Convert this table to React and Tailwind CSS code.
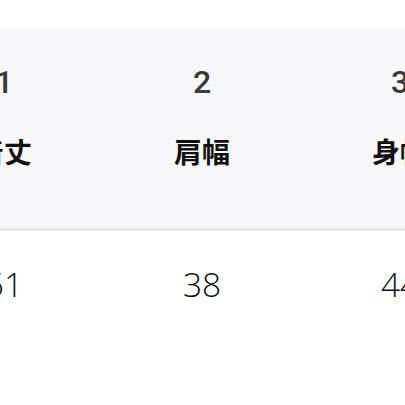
import React from 'react';

const columns = [
  { no: '1', label: '着丈', value: '51' },
  { no: '2', label: '肩幅', value: '38' },
  { no: '3', label: '身幅', value: '44' },
];

const App = () => {
  return (
    <div className="w-[405px] h-[405px] overflow-hidden bg-white">
      <div className="w-[594px] -ml-[95px] pt-[28px]">
        {/* header */}
        <div className="grid grid-cols-3 h-[203px] bg-[#f8f8fa] border-b-[3px] border-[#e9e9ed]">
          {columns.map((col) => (
            <div key={col.no} className="flex flex-col items-center pt-[34px]">
              <span
                className="text-[32px] leading-[40px] font-medium text-[#3a3a3a]"
                style={{ fontFamily: 'Roboto, "Liberation Sans", sans-serif' }}
              >
                {col.no}
              </span>
              <span
                className="mt-[34px] text-[28px] leading-[36px] font-bold text-[#111]"
                style={{ fontFamily: '"Liberation Sans", "Noto Sans CJK JP", sans-serif' }}
              >
                {col.label}
              </span>
            </div>
          ))}
        </div>
        {/* body */}
        <div className="grid grid-cols-3 pt-[33px]">
          {columns.map((col) => (
            <div key={col.no} className="flex justify-center">
              <span
                className="text-[33.5px] leading-[40px] font-light text-[#111]"
                style={{ fontFamily: '"Open Sans", "Noto Sans", sans-serif' }}
              >
                {col.value}
              </span>
            </div>
          ))}
        </div>
      </div>
    </div>
  );
};

export default App;
